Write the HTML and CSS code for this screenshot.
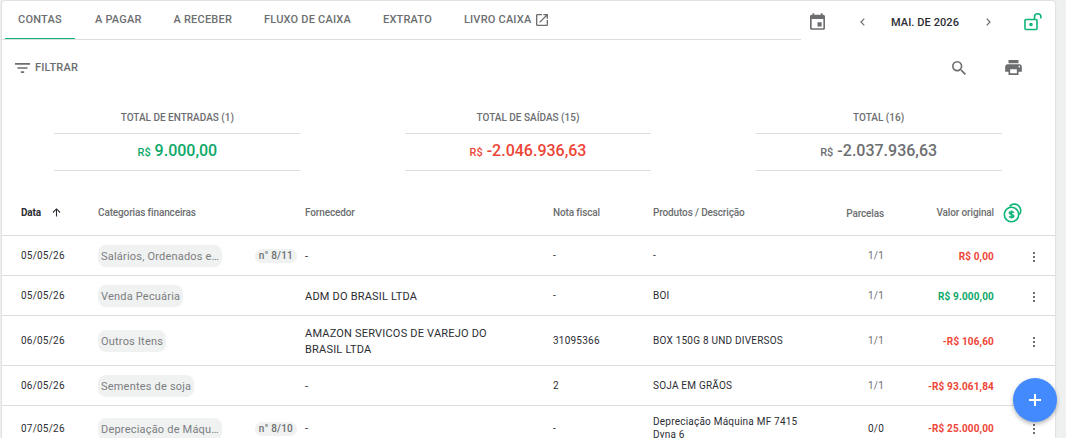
FILE: index.html
```html
<!DOCTYPE html>
<html lang="pt-BR">
  <head>
    <meta charset="utf-8" />
    <meta name="viewport" content="width=device-width, initial-scale=1.0" />
    <title>Contas</title>
    <link rel="stylesheet" href="styles.css">
  </head>

  <body>
    <main class="card">
      <header class="topbar">
        <nav class="tabs">
          <a class="tab active">CONTAS</a>
          <a class="tab">A PAGAR</a>
          <a class="tab">A RECEBER</a>
          <a class="tab">FLUXO DE CAIXA</a>
          <a class="tab">EXTRATO</a>
          <a class="tab">LIVRO CAIXA
            <svg class="icon-open" viewBox="3 3 18 18"><path d="M19 19H5V5h7V3H5a2 2 0 0 0-2 2v14a2 2 0 0 0 2 2h14c1.100 0 2-.9 2-2v-7h-2v7zM14 3v2h3.590l-9.830 9.830 1.410 1.410L19 6.410V10h2V3h-7z"/></svg>
          </a>
        </nav>
        <div class="period">
          <svg class="icon-calendar" viewBox="3 1 18 20"><path d="M17 12h-5v5h5v-5zM16 1v2H8V1H6v2H5c-1.110 0-1.990.9-1.990 2L3 19a2 2 0 0 0 2 2h14c1.100 0 2-.9 2-2V5c0-1.100-.9-2-2-2h-1V1h-2zm3 18H5V8h14v11z"/></svg>
          <svg class="icon-chevron" viewBox="0 0 5 8"><path d="M4.300.7L1 4l3.300 3.300"/></svg>
          <span class="month">MAI. DE 2026</span>
          <svg class="icon-chevron" viewBox="0 0 5 8"><path d="M.7.7L4 4 .7 7.300"/></svg>
          <svg class="icon-lock" viewBox="0 0 18 18"><rect x="1" y="6.500" width="12" height="10" rx="1"/><path d="M10.500 6.500V4a3.200 3.200 0 0 1 6.400 0v1.500"/><circle cx="7" cy="11.500" r="1"/></svg>
        </div>
      </header>

      <div class="toolbar">
        <a class="filter">
          <svg class="icon-filter" viewBox="3 6 18 12"><path d="M10 18h4v-2h-4v2zM3 6v2h18V6H3zm3 7h12v-2H6v2z"/></svg>
          FILTRAR
        </a>
        <svg class="icon-search" viewBox="3 3 17.500 17.500"><path d="M15.500 14h-.79l-.28-.27A6.471 6.471 0 0 0 16 9.500 6.500 6.500 0 1 0 9.500 16c1.610 0 3.090-.59 4.230-1.570l.27.28v.79l5 4.990L20.490 19l-4.990-5zm-6 0C7.010 14 5 11.990 5 9.500S7.010 5 9.500 5 14 7.010 14 9.500 11.990 14 9.500 14z"/></svg>
        <svg class="icon-print" viewBox="2 3 20 18"><path d="M19 8H5c-1.660 0-3 1.340-3 3v6h4v4h12v-4h4v-6c0-1.660-1.340-3-3-3zm-3 11H8v-5h8v5zm3-7c-.55 0-1-.45-1-1s.45-1 1-1 1 .45 1 1-.45 1-1 1zm-1-9H6v4h12V3z"/></svg>
      </div>

      <section class="totals">
        <div class="total">
          <div class="total-label">TOTAL DE ENTRADAS (1)</div>
          <div class="total-value green"><small>R$</small> 9.000,00</div>
        </div>
        <div class="total">
          <div class="total-label">TOTAL DE SAÍDAS (15)</div>
          <div class="total-value red"><small>R$</small> -2.046.936,63</div>
        </div>
        <div class="total">
          <div class="total-label">TOTAL (16)</div>
          <div class="total-value"><small>R$</small> -2.037.936,63</div>
        </div>
      </section>

      <section class="table">
        <div class="row head">
          <span class="sorted">Data
            <svg class="icon-sort" viewBox="0 0 10 10"><path d="M5 9.500V1M1 5l4-4 4 4"/></svg>
          </span>
          <span>Categorias financeiras</span>
          <span>Fornecedor</span>
          <span>Nota fiscal</span>
          <span>Produtos / Descrição</span>
          <span class="right parcel-head">Parcelas</span>
          <span class="right">Valor original</span>
          <svg class="icon-coins" viewBox="0 0 20 20"><path d="M6.500 3.400A6 6 0 1 1 16.300 11.500"/><circle cx="8.500" cy="11.500" r="7.200"/><path d="M10.800 9.700C10.500 8.500 6.400 8.400 6.400 10.100c0 1.800 4.400.9 4.400 2.900 0 1.700-4.100 1.700-4.500.2M8.500 7.400v8.200"/></svg>
        </div>

        <div class="row">
          <span class="date">05/05/26</span>
          <span class="category"><span class="chip">Salários, Ordenados e…</span><span class="number">n° 8/11</span></span>
          <span class="supplier">-</span>
          <span class="cell">-</span>
          <span class="cell">-</span>
          <span class="parcel right">1/1</span>
          <span class="amount right red">R$ 0,00</span>
          <svg class="icon-more" viewBox="0 0 4 10"><path d="M1 0h2v2H1zM1 4h2v2H1zM1 8h2v2H1z"/></svg>
        </div>

        <div class="row">
          <span class="date">05/05/26</span>
          <span class="category"><span class="chip">Venda Pecuária</span></span>
          <span class="supplier">ADM DO BRASIL LTDA</span>
          <span class="cell">-</span>
          <span class="cell">BOI</span>
          <span class="parcel right">1/1</span>
          <span class="amount right green">R$ 9.000,00</span>
          <svg class="icon-more" viewBox="0 0 4 10"><path d="M1 0h2v2H1zM1 4h2v2H1zM1 8h2v2H1z"/></svg>
        </div>

        <div class="row tall">
          <span class="date">06/05/26</span>
          <span class="category"><span class="chip">Outros Itens</span></span>
          <span class="supplier">AMAZON SERVICOS DE VAREJO DO BRASIL LTDA</span>
          <span class="cell">31095366</span>
          <span class="cell">BOX 150G 8 UND DIVERSOS</span>
          <span class="parcel right">1/1</span>
          <span class="amount right red">-R$ 106,60</span>
          <svg class="icon-more" viewBox="0 0 4 10"><path d="M1 0h2v2H1zM1 4h2v2H1zM1 8h2v2H1z"/></svg>
        </div>

        <div class="row">
          <span class="date">06/05/26</span>
          <span class="category"><span class="chip">Sementes de soja</span></span>
          <span class="supplier">-</span>
          <span class="cell">2</span>
          <span class="cell">SOJA EM GRÃOS</span>
          <span class="parcel right">1/1</span>
          <span class="amount right red">-R$ 93.061,84</span>
          <svg class="icon-more" viewBox="0 0 4 10"><path d="M1 0h2v2H1zM1 4h2v2H1zM1 8h2v2H1z"/></svg>
        </div>

        <div class="row last">
          <span class="date">07/05/26</span>
          <span class="category"><span class="chip">Depreciação de Máqu…</span><span class="number">n° 8/10</span></span>
          <span class="supplier">-</span>
          <span class="cell">-</span>
          <span class="cell">Depreciação Máquina MF 7415 Dyna 6</span>
          <span class="parcel right dark">0/0</span>
          <span class="amount right red">-R$ 25.000,00</span>
          <svg class="icon-more" viewBox="0 0 4 10"><path d="M1 0h2v2H1zM1 4h2v2H1zM1 8h2v2H1z"/></svg>
        </div>
      </section>
    </main>

    <button class="add" title="Adicionar">
      <svg class="icon-plus" viewBox="0 0 12 12"><path d="M6 0v12M0 6h12"/></svg>
    </button>
  </body>
</html>
```
FILE: styles.css
```css
* {
  box-sizing: border-box;
}

html {
  height: 100%;
  overflow: hidden;
}

body {
  margin: 0;
  height: 100%;
  padding: 1px 11px 0 2px;
  overflow: hidden;
  background: #eff0f0;
  color: #6c6e70;
  font-family: Roboto, "Liberation Sans", sans-serif;
  font-size: 11px;
}

svg {
  flex: none;
  fill: currentColor;
}

.card {
  height: 100%;
  overflow: hidden;
  background: #fff;
  border-radius: 3px 3px 0 0;
  box-shadow: 0 0 2px rgba(0, 0, 0, 0.22);
}

.topbar {
  display: flex;
  height: 39px;
}

.tabs {
  display: flex;
  width: 799px;
  padding-left: 3px;
  border-bottom: 1px solid #dcdddd;
}

.tab {
  display: flex;
  align-items: center;
  height: 38px;
  padding: 0 13px;
  margin-right: 6px;
  border-bottom: 1px solid transparent;
  font-weight: 500;
  letter-spacing: 0.2px;
  white-space: nowrap;
}

.tab.active {
  width: 70px;
  margin-right: 7px;
  border-bottom-color: #0db577;
}

.icon-open {
  width: 12px;
  height: 12px;
  margin: 1px 0 0 5px;
}

.period {
  display: flex;
  align-items: center;
  flex: 1;
  height: 41px;
  padding-left: 9px;
}

.icon-calendar {
  width: 15px;
  height: 17px;
  margin-right: 35px;
}

.icon-chevron {
  width: 5px;
  height: 8px;
  fill: none;
  stroke: currentColor;
  stroke-width: 1.2;
}

.month {
  width: 69px;
  margin: 2px 26px 0;
  color: #2c2d33;
  font-weight: 500;
  letter-spacing: 0.08px;
  white-space: nowrap;
}

.icon-lock {
  width: 18px;
  height: 18px;
  margin-left: 33px;
  fill: none;
  stroke: #0db577;
  stroke-width: 1.6;
}

.toolbar {
  display: flex;
  align-items: center;
  height: 55px;
  padding: 0 33px 0 13px;
}

.filter {
  display: flex;
  align-items: center;
  gap: 5px;
  flex: 1;
  font-weight: 500;
  letter-spacing: 0.2px;
}

.icon-filter {
  width: 15px;
  height: 10px;
}

.icon-search {
  width: 14px;
  height: 14px;
  margin-right: 39px;
}

.icon-print {
  width: 17px;
  height: 15px;
}

.totals {
  display: grid;
  grid-template-columns: repeat(3, 1fr);
  height: 95px;
  padding: 7px 1px 0 0;
}

.total {
  width: 246px;
  margin: 0 auto;
  text-align: center;
}

.total-label {
  height: 32px;
  padding-top: 9px;
  border-bottom: 1px solid #dcdddd;
  font-size: 10px;
  font-weight: 500;
  line-height: 13px;
}

.total-value {
  height: 37px;
  border-bottom: 1px solid #dcdddd;
  font-size: 16px;
  font-weight: 500;
  line-height: 33px;
}

.total-value small {
  font-size: 11px;
}

.green {
  color: #0da869;
}

.red {
  color: #ed4536;
}

.row {
  display: grid;
  grid-template-columns: 77px 207px 248px 100px 170px 61px 110px 1fr;
  align-items: center;
  height: 40px;
  padding-left: 19px;
  border-bottom: 1px solid #dcdddd;
}

.row.head {
  height: 46px;
  font-size: 10px;
  font-weight: 500;
  letter-spacing: -0.13px;
}

.row.tall {
  height: 50px;
}

.row.last {
  height: 45px;
}

.sorted {
  display: flex;
  align-items: center;
  gap: 11px;
  color: #2c2d33;
  font-weight: 700;
}

.icon-sort {
  width: 9px;
  height: 9px;
  fill: none;
  stroke: currentColor;
  stroke-width: 1.2;
}

.icon-coins {
  width: 20px;
  height: 20px;
  margin-left: 9px;
  fill: none;
  stroke: #0db577;
  stroke-width: 1.6;
}

.right {
  text-align: right;
}

.parcel-head {
  padding-top: 2px;
}

.date,
.cell,
.parcel {
  font-size: 10px;
  line-height: 13px;
  letter-spacing: 0.22px;
}

.date,
.cell,
.supplier,
.dark {
  color: #2c2d33;
}

.cell {
  max-width: 160px;
}

.category {
  display: flex;
  align-items: center;
  justify-content: space-between;
  padding: 1px 8px 0 0;
}

.chip {
  padding: 1px 3px 0;
  border-radius: 8px;
  background: #f0f2f2;
  color: #7b7d7f;
  letter-spacing: 0.2px;
  line-height: 21px;
  white-space: nowrap;
}

.number {
  padding: 0 4px;
  border-radius: 7px;
  background: #f0f2f2;
  font-size: 10px;
  font-weight: 500;
  letter-spacing: 0.2px;
  line-height: 14px;
}

.supplier {
  max-width: 200px;
  padding-top: 2px;
  letter-spacing: 0.2px;
  line-height: 16px;
}

.amount {
  padding-top: 1px;
  font-size: 10px;
  font-weight: 700;
  letter-spacing: 0.15px;
}

.icon-more {
  width: 4px;
  height: 10px;
  margin: 2px 0 0 38px;
}

.add {
  position: fixed;
  right: 9px;
  bottom: 16px;
  display: flex;
  align-items: center;
  justify-content: center;
  width: 44px;
  height: 44px;
  padding: 0;
  border: 0;
  border-radius: 50%;
  background: #448aff;
  box-shadow: 0 2px 4px rgba(0, 0, 0, 0.3);
}

.icon-plus {
  width: 12px;
  height: 12px;
  stroke: #fff;
  stroke-width: 2;
}
```
